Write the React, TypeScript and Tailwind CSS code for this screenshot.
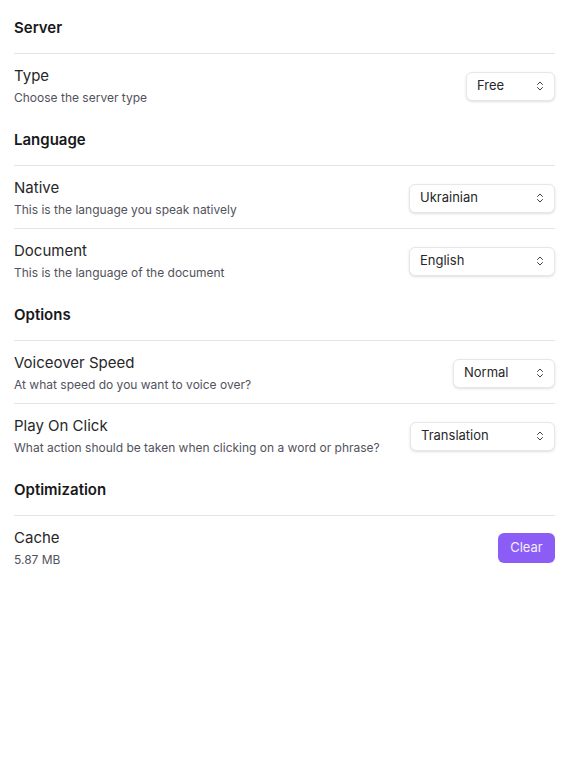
import { ChevronsUpDown } from 'lucide-react';

type Row = {
  title: string;
  description: string;
  value?: string;
  width?: string;
  button?: string;
};

type Section = {
  heading: string;
  rows: Row[];
};

const sections: Section[] = [
  {
    heading: 'Server',
    rows: [
      { title: 'Type', description: 'Choose the server type', value: 'Free', width: 'w-[89px]' },
    ],
  },
  {
    heading: 'Language',
    rows: [
      { title: 'Native', description: 'This is the language you speak natively', value: 'Ukrainian', width: 'w-[146px]' },
      { title: 'Document', description: 'This is the language of the document', value: 'English', width: 'w-[146px]' },
    ],
  },
  {
    heading: 'Options',
    rows: [
      { title: 'Voiceover Speed', description: 'At what speed do you want to voice over?', value: 'Normal', width: 'w-[102px]' },
      { title: 'Play On Click', description: 'What action should be taken when clicking on a word or phrase?', value: 'Translation', width: 'w-[145px]' },
    ],
  },
  {
    heading: 'Optimization',
    rows: [{ title: 'Cache', description: '5.87 MB', button: 'Clear' }],
  },
];

function SelectBox({ value, width }: { value: string; width?: string }) {
  return (
    <button
      className={`flex h-[29px] ${width} items-center justify-between rounded-md border border-gray-200 bg-white pl-[10px] pr-[8px] text-[13px] text-zinc-800 shadow-sm`}
    >
      <span>{value}</span>
      <ChevronsUpDown className="h-3 w-3 text-zinc-700" strokeWidth={2} />
    </button>
  );
}

export default function App() {
  return (
    <div
      className="min-h-screen bg-white pl-[14px] pr-[13px] pt-[4px] text-zinc-800"
      style={{ fontFamily: 'Inter, "Noto Sans", sans-serif' }}
    >
      {sections.map((section) => (
        <div key={section.heading}>
          <h2 className="border-b border-zinc-200 pb-[15px] pt-[14px] text-[15px] font-semibold leading-5 text-zinc-900">
            {section.heading}
          </h2>
          {section.rows.map((row, i) => (
            <div
              key={row.title}
              className={`flex items-center justify-between pb-[10px] pt-[12px] ${
                i < section.rows.length - 1 ? 'border-b border-zinc-200' : ''
              }`}
            >
              <div>
                <p className="text-[15px] leading-5 text-zinc-800">{row.title}</p>
                <p className="mt-[4px] text-[12px] leading-4 text-zinc-600">{row.description}</p>
              </div>
              {row.value && <SelectBox value={row.value} width={row.width} />}
              {row.button && (
                <button className="h-[30px] w-[57px] rounded-md bg-[#8b5cf6] text-[13px] text-white/90">
                  {row.button}
                </button>
              )}
            </div>
          ))}
        </div>
      ))}
    </div>
  );
}
